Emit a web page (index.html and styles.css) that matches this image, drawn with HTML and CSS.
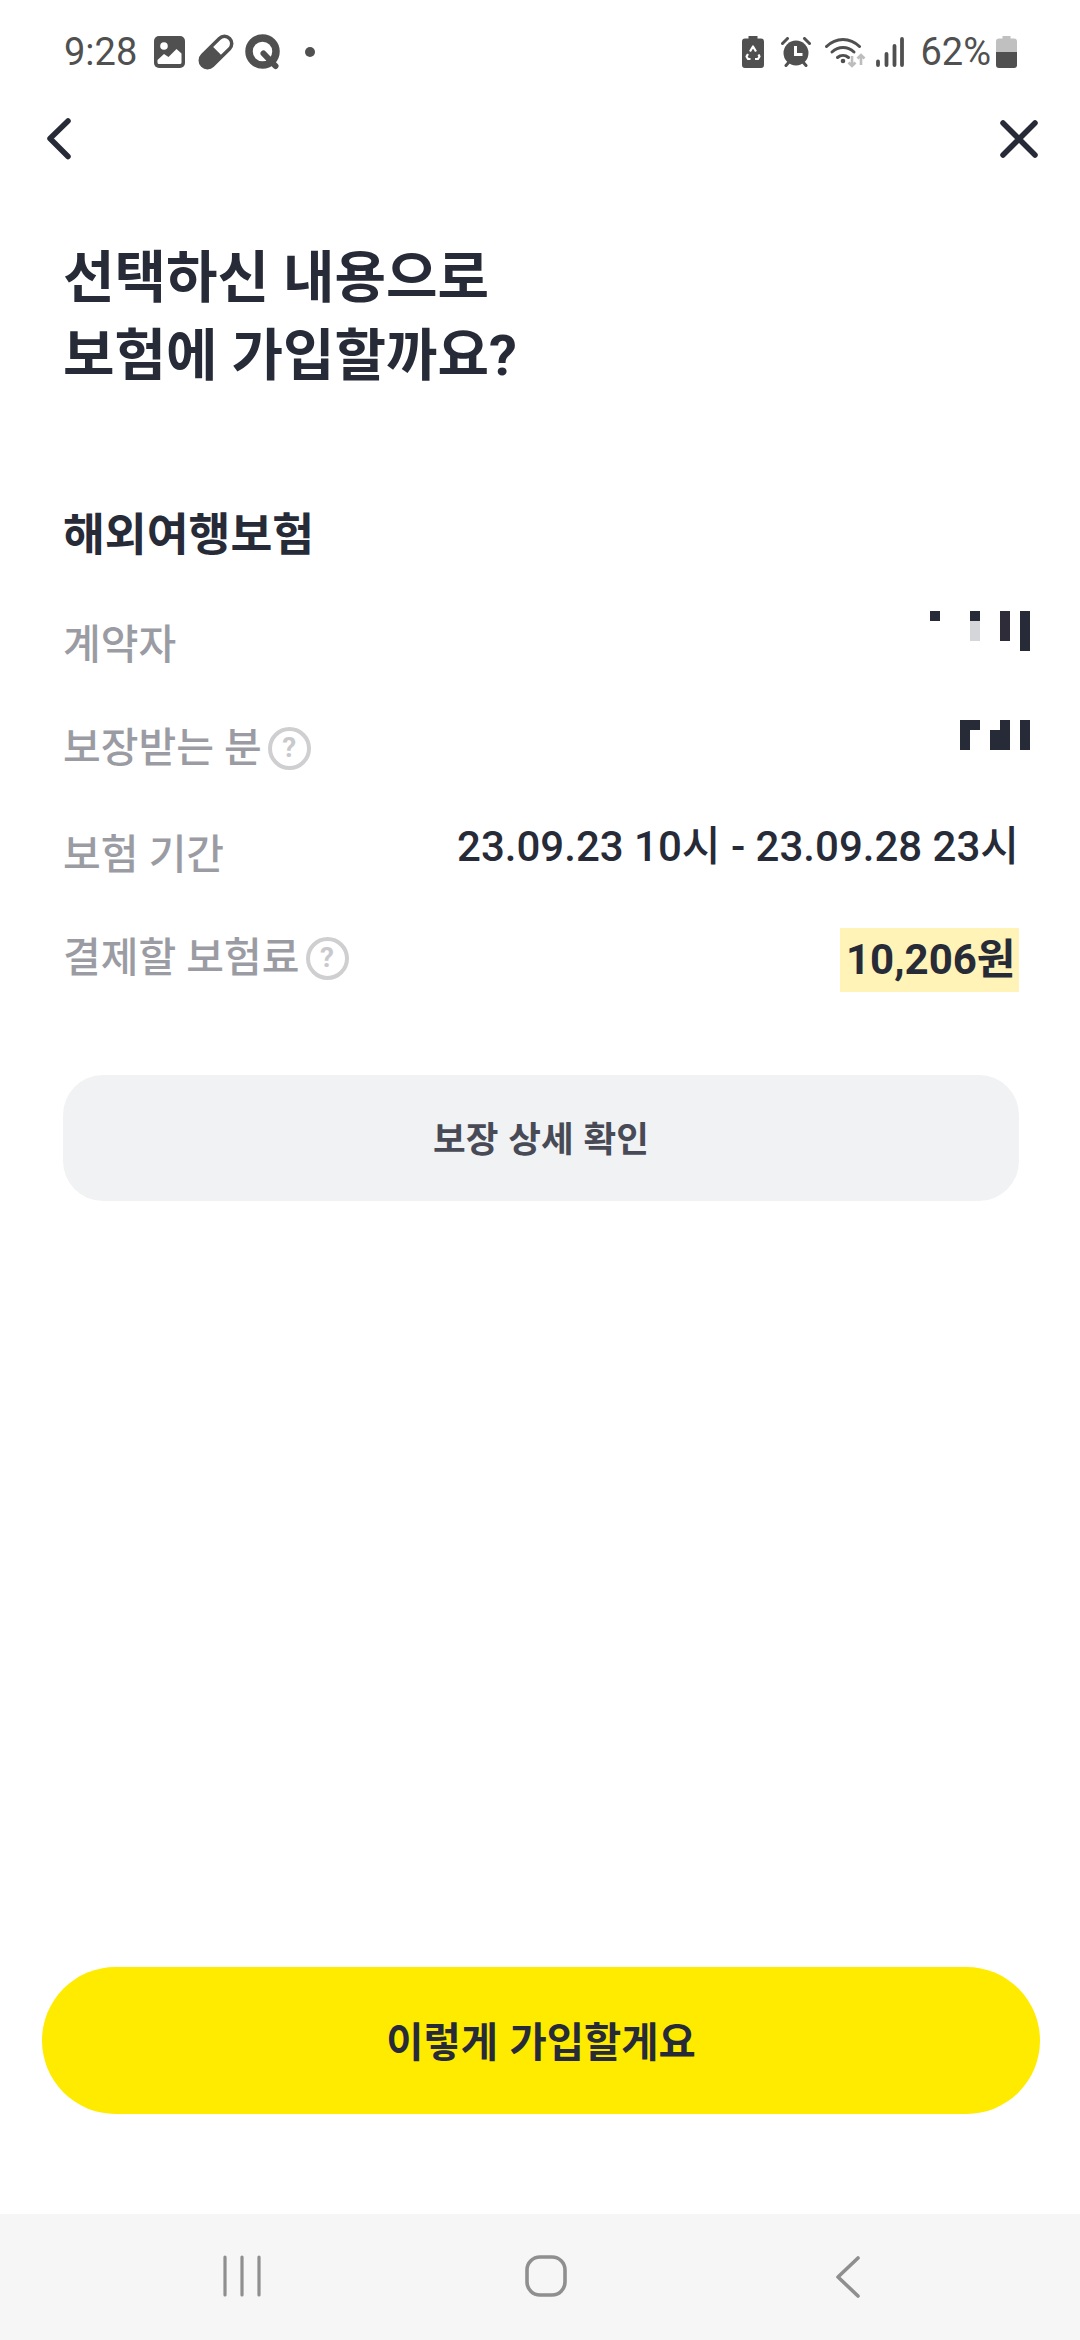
FILE: index.html
```html
<!DOCTYPE html>
<html lang="ko">
<head>
  <meta charset="UTF-8" />
  <title>보험 가입 확인</title>
  <link rel="stylesheet" href="styles.css">
</head>
<body>
<div class="page">

  <!-- status bar -->
  <div class="status">
    <div class="status-left">
      <span class="clock">9:28</span>
      <svg class="ic-image" width="31" height="32" viewBox="0 0 31 32">
        <rect width="31" height="32" rx="5" fill="#505050"/>
        <circle cx="10" cy="10" r="3.800" fill="#fff"/>
        <path d="M3.500 26.500v-2.500l6.500-6 4.500 3 8-8 5 4.500v9a1.500 1.500 0 0 1-1.500 1.500H5a1.500 1.500 0 0 1-1.500-1.500z" fill="#fff"/>
      </svg>
      <svg class="ic-pill" width="36" height="36" viewBox="0 0 36 36">
        <g transform="rotate(-45 18 18)">
          <rect x="-3" y="9" width="42" height="18" rx="9" fill="#505050"/>
          <path d="M19.500 12.500h10.500a5.500 5.500 0 0 1 0 11H19.500z" fill="#fff"/>
        </g>
      </svg>
      <svg class="ic-q" width="36" height="36" viewBox="0 0 36 36">
        <circle cx="17.500" cy="17.500" r="13.500" fill="none" stroke="#505050" stroke-width="7.500"/>
        <path d="M18.500 19.500l12 12.500" stroke="#505050" stroke-width="6" stroke-linecap="round"/>
      </svg>
      <span class="dot"></span>
    </div>
    <div class="status-right">
      <svg class="ic-saver" width="22" height="32" viewBox="0 0 22 32">
        <path d="M6.500 0h9v2.500h3.500a3 3 0 0 1 3 3V29a3 3 0 0 1-3 3H3a3 3 0 0 1-3-3V5.500a3 3 0 0 1 3-3h3.500z" fill="#505050"/>
        <path d="M8 15.500l3-5 3 5M16.500 18.500l1 2-1.500 2.500h-3M8.500 23H6l-1.500-2.500 1.500-2.500" fill="none" stroke="#fff" stroke-width="2.200" stroke-linejoin="round"/>
      </svg>
      <svg class="ic-alarm" width="30" height="30" viewBox="0 0 30 30">
        <circle cx="15" cy="16" r="12.500" fill="#505050"/>
        <path d="M14.500 9v8.500h7" fill="none" stroke="#fff" stroke-width="3"/>
        <path d="M1.500 6.500l5-5M28.500 6.500l-5-5M5 28.500l3-3.500M25 28.500L22 25" stroke="#505050" stroke-width="3" stroke-linecap="round"/>
      </svg>
      <svg class="ic-wifi" width="42" height="32" viewBox="0 0 42 32">
        <path d="M1.500 10.500C11 1 25 1 34.500 10.500" fill="none" stroke="#505050" stroke-width="3" stroke-linecap="round"/>
        <path d="M7 16c6.500-6 15.500-6 22 0" fill="none" stroke="#505050" stroke-width="3" stroke-linecap="round"/>
        <path d="M12.500 21.500c3.200-2.800 7.800-2.800 11 0" fill="none" stroke="#505050" stroke-width="3" stroke-linecap="round"/>
        <circle cx="18" cy="25" r="2.300" fill="#505050"/>
        <path d="M27 20v10M23.500 26.500l3.500 3.500 3.500-3.500M36 29V19M32.500 22.500l3.500-3.500 3.500 3.500" fill="none" stroke="#bdbdbd" stroke-width="2.600"/>
      </svg>
      <svg class="ic-signal" width="28" height="30" viewBox="0 0 28 30">
        <path d="M2 24.500v3.500M10.500 17v11M18.500 9v19M26 2v26" stroke="#505050" stroke-width="3.800" stroke-linecap="round"/>
      </svg>
      <span class="percent">62%</span>
      <svg class="ic-battery" width="21" height="32" viewBox="0 0 21 32">
        <path d="M6.500 0h8v2.500h3.500a3 3 0 0 1 3 3V16H0V5.500a3 3 0 0 1 3-3h3.500z" fill="#c0c0c0"/>
        <path d="M0 16h21v13a3 3 0 0 1-3 3H3a3 3 0 0 1-3-3z" fill="#505050"/>
      </svg>
    </div>
  </div>

  <!-- top bar -->
  <div class="topbar">
    <svg width="26" height="44" viewBox="0 0 26 44">
      <path d="M23 4L5 21.500 23 39.500" fill="none" stroke="#272b38" stroke-width="5.500" stroke-linecap="round" stroke-linejoin="round"/>
    </svg>
    <svg width="40" height="40" viewBox="0 0 40 40">
      <path d="M4 4l32 32M36 4L4 36" fill="none" stroke="#272b38" stroke-width="5.500" stroke-linecap="round"/>
    </svg>
  </div>

  <h1 class="title">선택하신 내용으로<br>보험에 가입할까요?</h1>

  <h2 class="product">해외여행보험</h2>

  <div class="row row-first">
    <span class="label">계약자</span>
    <svg class="mask mask-top" width="100" height="40" viewBox="0 0 100 40" shape-rendering="crispEdges">
      <rect x="0" y="0" width="10" height="10" fill="#272b38"/>
      <rect x="40" y="0" width="10" height="10" fill="#272b38"/>
      <rect x="40" y="10" width="10" height="20" fill="#d5d6d9"/>
      <rect x="70" y="0" width="10" height="30" fill="#2d2c38"/>
      <rect x="90" y="0" width="10" height="40" fill="#272b38"/>
    </svg>
  </div>

  <div class="row">
    <span class="label">보장받는 분<span class="help">?</span></span>
    <svg class="mask mask-second" width="70" height="30" viewBox="0 0 70 30" shape-rendering="crispEdges">
      <rect x="0" y="0" width="20" height="10" fill="#272b38"/>
      <rect x="0" y="10" width="10" height="20" fill="#272b38"/>
      <rect x="30" y="10" width="20" height="20" fill="#272b38"/>
      <rect x="40" y="0" width="10" height="10" fill="#272b38"/>
      <rect x="60" y="0" width="10" height="30" fill="#272b38"/>
    </svg>
  </div>

  <div class="row row-period">
    <span class="label label-period">보험 기간</span>
    <span class="value">23.09.23 10시 - 23.09.28 23시</span>
  </div>

  <div class="row row-price">
    <span class="label">결제할 보험료<span class="help">?</span></span>
    <span class="price">10,206원</span>
  </div>

  <button class="detail-btn" type="button">보장 상세 확인</button>

  <button class="join-btn" type="button">이렇게 가입할게요</button>

  <!-- android nav -->
  <div class="navbar">
    <svg width="44" height="42" viewBox="0 0 44 42">
      <path d="M5 2v38M22 2v38M39 2v38" stroke="#8f8f8f" stroke-width="3.200" stroke-linecap="round"/>
    </svg>
    <svg class="nav-home" width="42" height="42" viewBox="0 0 42 42">
      <rect x="2" y="2" width="38" height="38" rx="13" fill="none" stroke="#8f8f8f" stroke-width="3.600"/>
    </svg>
    <svg width="26" height="44" viewBox="0 0 26 44">
      <path d="M23 3L3 22l20 19" fill="none" stroke="#8f8f8f" stroke-width="3.600" stroke-linecap="round" stroke-linejoin="round"/>
    </svg>
  </div>

</div>
</body>
</html>
```
FILE: styles.css
```css
* { box-sizing: border-box; }
html, body { margin: 0; padding: 0; }
body {
  font-family: Roboto, "Noto Sans CJK KR", sans-serif;
  color: #272b38;
  background: #fff;
}
.page {
  width: 1080px; height: 2340px;
  display: flex; flex-direction: column;
  overflow: hidden;
}

.status {
  height: 104px; padding: 0 63px 0 64px;
  display: flex; justify-content: space-between; align-items: center;
  color: #505050;
}
.status-left, .status-right { display: flex; align-items: center; }
.clock { font-size: 38px; width: 90px; }
.ic-pill { margin-left: 13px; }
.ic-q { margin-left: 11px; }
.dot { width: 10px; height: 10px; border-radius: 50%; background: #505050; margin-left: 24px; }
.ic-alarm { margin-left: 17px; }
.ic-wifi { margin-left: 14px; }
.ic-signal { margin-left: 9px; }
.percent { font-size: 38px; margin-left: 16px; }
.ic-battery { margin-left: 5px; }

.topbar {
  height: 70px; padding: 0 41px 0 45px;
  display: flex; justify-content: space-between; align-items: center;
}

.title {
  margin: 65px 0 0; padding-left: 63px;
  font-size: 56px; line-height: 78px; font-weight: 700;
}
.product {
  margin: 111px 0 0; padding-left: 63px;
  font-size: 45.500px; line-height: 60px; font-weight: 700;
}

.row {
  margin-top: 43px; padding: 0 61px 0 63px;
  display: flex; justify-content: space-between; align-items: flex-start;
}
.row-first { margin-top: 49px; height: 60px; }
.row-period { margin-top: 39px; }
.label {
  display: flex; align-items: center;
  font-size: 41px; line-height: 60px; font-weight: 500; color: #9b9ca3;
}
.label-period { padding-top: 8px; }
.help {
  width: 43px; height: 43px; margin-left: 6px;
  border: 4px solid #cfcfd1; border-radius: 50%;
  display: flex; align-items: center; justify-content: center;
  font-size: 28px; line-height: 1; font-weight: 700; color: #c9c9cc;
}
.mask { margin-right: -11px; display: block; }
.mask-top { margin-top: -4px; }
.mask-second { margin-top: 2px; }
.value { font-size: 42px; line-height: 60px; font-weight: 500; }
.price {
  background: #fff3b8; width: 179px; height: 64px; padding: 0 4px 0 6px;
  font-size: 42px; line-height: 64px; font-weight: 700; white-space: nowrap;
}

.detail-btn {
  margin: 83px 61px 0 63px; height: 126px; padding-bottom: 4px;
  background: #f1f2f4; border: none; border-radius: 40px;
  font: 700 35.500px "Noto Sans CJK KR", sans-serif; color: #484b56;
}
.join-btn {
  margin: auto 40px 100px 42px; height: 147px; padding-bottom: 4px;
  background: #ffeb00; border: none; border-radius: 74px;
  font: 700 40.500px "Noto Sans CJK KR", sans-serif; color: #272b38;
}

.navbar {
  height: 126px; background: #f6f6f6; padding: 41px 219px 0 220px;
  display: flex; justify-content: space-between; align-items: flex-start;
}
.nav-home { margin-left: -8px; }
```
